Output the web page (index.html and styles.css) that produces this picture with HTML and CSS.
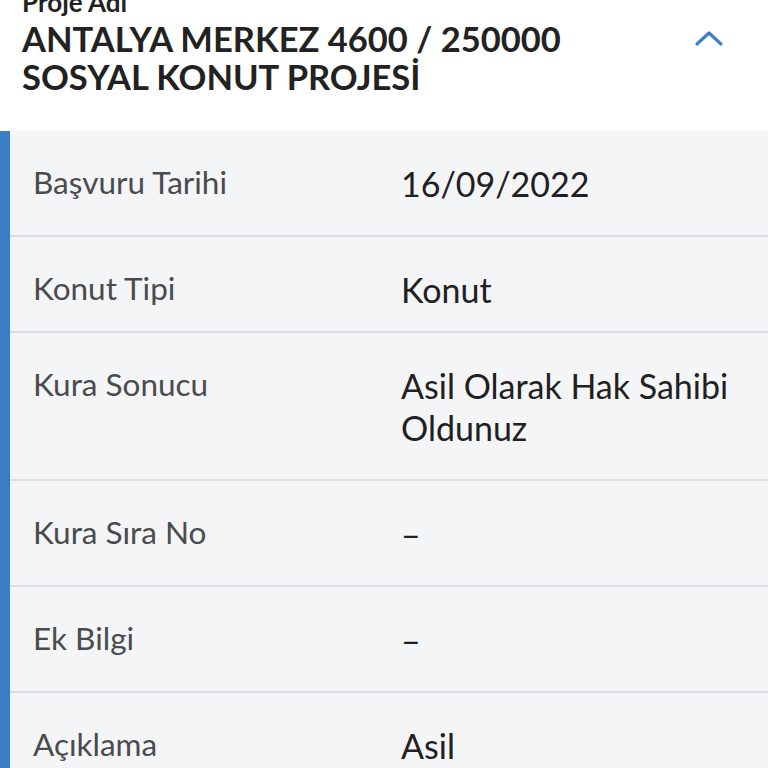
FILE: index.html
```
<!DOCTYPE html>
<html>

<head>
    <meta charset="UTF-8">
    <title>Proje Detayı</title>
    <link rel="stylesheet" href="styles.css">
</head>

<body>
    <div class="project-head">
        <div class="project-text">
            <div class="project-caption">Proje Adı</div>
            <h1 class="project-title">ANTALYA MERKEZ 4600 / 250000<br>SOSYAL KONUT PROJESİ</h1>
        </div>
        <svg class="chevron" width="30" height="18" viewBox="0 0 30 18">
            <polyline points="3,15 15,4 27,15" fill="none" stroke="#3f80c2" stroke-width="3.2" stroke-linecap="round" stroke-linejoin="round"/>
        </svg>
    </div>

    <div class="details">
        <div class="row">
            <div class="label">Başvuru Tarihi</div>
            <div class="value">16/09/2022</div>
        </div>
        <div class="row short">
            <div class="label">Konut Tipi</div>
            <div class="value">Konut</div>
        </div>
        <div class="row">
            <div class="label">Kura Sonucu</div>
            <div class="value">Asil Olarak Hak Sahibi<br>Oldunuz</div>
        </div>
        <div class="row">
            <div class="label">Kura Sıra No</div>
            <div class="value dash">–</div>
        </div>
        <div class="row">
            <div class="label">Ek Bilgi</div>
            <div class="value dash">–</div>
        </div>
        <div class="row">
            <div class="label">Açıklama</div>
            <div class="value">Asil</div>
        </div>
    </div>
</body>

</html>
```

FILE: styles.css
```
body {
    margin: 0;
    background-color: #fff;
    font-family: Lato, "Open Sans", sans-serif;
    color: #222;
    overflow: hidden;
}

/* page is scrolled a little, so the caption is cut at the top */
.project-head {
    display: flex;
    align-items: flex-start;
    justify-content: space-between;
    padding: 0 44px 35px 22px;
    margin-top: -14px;
}

.project-caption {
    font-size: 26px;
    font-weight: bold;
    line-height: 32px;
    margin-bottom: 2px;
}

.project-title {
    margin: 0;
    font-size: 34.5px;
    font-weight: bold;
    line-height: 38px;
    color: #222;
}

.chevron {
    margin-top: 43px;
}

.details {
    background-color: #f4f5f7;
    border-left: 10px solid #3b7dc3;
}

.row {
    display: grid;
    grid-template-columns: 368px 1fr;
    align-items: start;
    padding: 32px 23px 30px;
    border-bottom: 2px solid #dcdee1;
}

.row.short {
    padding-bottom: 20px;
}

.label {
    font-size: 31.5px;
    line-height: 38px;
    color: #4a4b4d;
}

.value {
    font-size: 34px;
    line-height: 42px;
    color: #1f2022;
}
```
